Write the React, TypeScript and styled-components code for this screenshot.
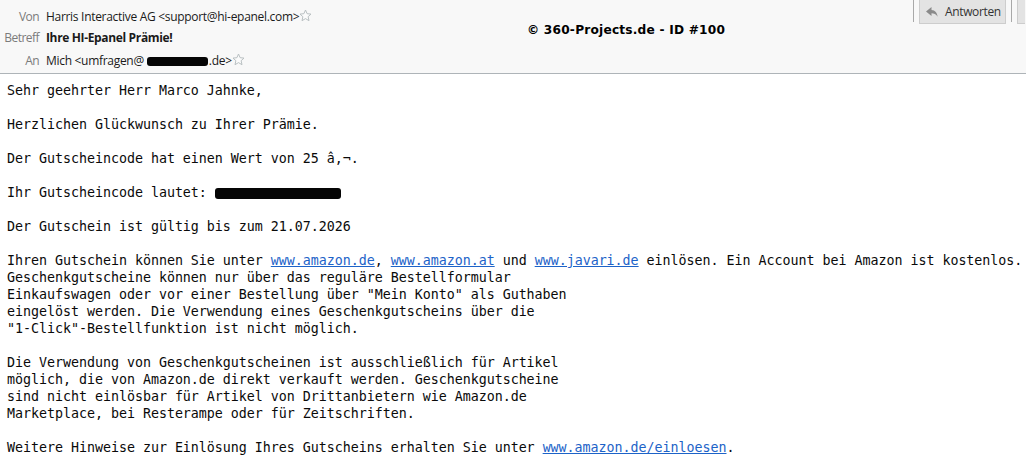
import React from "react";
import styled, { createGlobalStyle } from "styled-components";

const Global = createGlobalStyle`
  html, body { margin: 0; padding: 0; background: #fff; }
  body { width: 1026px; height: 460px; overflow: hidden; }
`;

const Page = styled.div`
  width: 1026px;
  height: 460px;
  overflow: hidden;
  display: flex;
  flex-direction: column;
`;

const Header = styled.header`
  position: relative;
  height: 74px;
  box-sizing: border-box;
  flex: none;
  background: #f8f8f8;
  border-bottom: 1px solid #aeb4b8;
  padding-top: 6px;
  font: 12px/22px "Open Sans", "Noto Sans", sans-serif;
  color: #1a1a1a;
`;

const HeaderRow = styled.div<{ $gap?: number }>`
  display: flex;
  align-items: center;
  height: 21px;
  margin-top: ${(p) => p.$gap ?? 0}px;
`;

const Label = styled.span`
  width: 39px;
  text-align: right;
  color: #7b7b7b;
  margin-right: 7px;
  flex: none;
  letter-spacing: -0.55px;
`;

const Value = styled.span<{ $bold?: boolean }>`
  font-weight: ${(p) => (p.$bold ? 700 : 400)};
  letter-spacing: ${(p) => (p.$bold ? "-0.35px" : "-0.3px")};
  white-space: pre;
  display: inline-flex;
  align-items: center;
`;

const Blackout = styled.span<{ $w: number; $h: number }>`
  display: inline-block;
  width: ${(p) => p.$w}px;
  height: ${(p) => p.$h}px;
  background: #050505;
  border-radius: 3px;
  vertical-align: middle;
`;

const AddressMask = styled(Blackout)`
  margin: 1px 1px 0 3px;
`;

const StarIcon = styled.svg`
  width: 13px;
  height: 13px;
  flex: none;
  margin-top: -3px;
`;

const Star = () => (
  <StarIcon viewBox="0 0 13 13">
    <path
      d="M6.5 1 8.1 4.7 12 5.1 9.1 7.7 10 11.7 6.5 9.6 3 11.7 3.9 7.7 1 5.1 4.9 4.7Z"
      fill="#fbfbfb"
      stroke="#b9c0c2"
      strokeWidth="1"
    />
  </StarIcon>
);

const Watermark = styled.div`
  position: absolute;
  left: 527px;
  top: 21px;
  font: 700 12.2px/18px "DejaVu Sans", sans-serif;
  letter-spacing: 0.2px;
  color: #000;
  white-space: pre;
`;

const Toolbar = styled.div`
  position: absolute;
  top: 0;
  left: 913px;
  display: flex;
  align-items: flex-start;
`;

const Separator = styled.span`
  width: 1px;
  height: 22px;
  background: #a9a9a9;
`;

const ReplyButton = styled.button`
  width: 87px;
  height: 24px;
  box-sizing: border-box;
  margin: 0 5px;
  padding: 0 0 0 5px;
  display: flex;
  align-items: center;
  gap: 6px;
  background: #e3e3e3;
  border: 1px solid #cdcdcd;
  border-top: none;
  font: 12px "Open Sans", "Noto Sans", sans-serif;
  letter-spacing: -0.35px;
  color: #333;
`;

const NextButton = styled.span`
  width: 8px;
  height: 24px;
  box-sizing: border-box;
  margin-left: 5px;
  background: #e3e3e3;
  border: 1px solid #cdcdcd;
  border-top: none;
  border-right: none;
`;

const Body = styled.main`
  padding: 8px 0 0 7px;
  font: 13.33px/17px "DejaVu Sans Mono", "Liberation Mono", monospace;
  letter-spacing: -0.03px;
  color: #0a0a0a;
  white-space: pre;
`;

const Line = styled.div`
  height: 17px;
`;

const Link = styled.a`
  color: #1d63c8;
  text-decoration: underline;
`;

const CodeMask = styled(Blackout)`
  margin-top: 0;
`;

export default function App() {
  return (
    <Page>
      <Global />
      <Header>
        <HeaderRow>
          <Label>Von</Label>
          <Value>Harris Interactive AG &lt;support@hi-epanel.com&gt;</Value>
          <Star />
        </HeaderRow>
        <HeaderRow>
          <Label>Betreff</Label>
          <Value $bold>Ihre HI-Epanel Prämie!</Value>
        </HeaderRow>
        <HeaderRow $gap={2}>
          <Label>An</Label>
          <Value>
            Mich &lt;umfragen@<AddressMask $w={61} $h={9} />.de&gt;
          </Value>
          <Star />
        </HeaderRow>
        <Watermark>© 360-Projects.de - ID #100</Watermark>
        <Toolbar>
          <Separator />
          <ReplyButton>
            <svg width="14" height="12" viewBox="0 0 14 12">
              <path d="M6.5 1 1 5.6 6.5 10V7.2C9 7.2 11 8 12.6 10.8 12.4 7 10 4 6.5 3.9Z" fill="#8a8a8a" />
            </svg>
            Antworten
          </ReplyButton>
          <Separator />
          <NextButton />
        </Toolbar>
      </Header>
      <Body>
        <Line>Sehr geehrter Herr Marco Jahnke,</Line>
        <Line />
        <Line>Herzlichen Glückwunsch zu Ihrer Prämie.</Line>
        <Line />
        <Line>Der Gutscheincode hat einen Wert von 25 â‚¬.</Line>
        <Line />
        <Line>
          Ihr Gutscheincode lautet: <CodeMask $w={126} $h={11} />
        </Line>
        <Line />
        <Line>Der Gutschein ist gültig bis zum 21.07.2026</Line>
        <Line />
        <Line>
          Ihren Gutschein können Sie unter <Link href="#">www.amazon.de</Link>, <Link href="#">www.amazon.at</Link> und{" "}
          <Link href="#">www.javari.de</Link> einlösen. Ein Account bei Amazon ist kostenlos.
        </Line>
        <Line>Geschenkgutscheine können nur über das reguläre Bestellformular</Line>
        <Line>Einkaufswagen oder vor einer Bestellung über "Mein Konto" als Guthaben</Line>
        <Line>eingelöst werden. Die Verwendung eines Geschenkgutscheins über die</Line>
        <Line>"1-Click"-Bestellfunktion ist nicht möglich.</Line>
        <Line />
        <Line>Die Verwendung von Geschenkgutscheinen ist ausschließlich für Artikel</Line>
        <Line>möglich, die von Amazon.de direkt verkauft werden. Geschenkgutscheine</Line>
        <Line>sind nicht einlösbar für Artikel von Drittanbietern wie Amazon.de</Line>
        <Line>Marketplace, bei Resterampe oder für Zeitschriften.</Line>
        <Line />
        <Line>
          Weitere Hinweise zur Einlösung Ihres Gutscheins erhalten Sie unter <Link href="#">www.amazon.de/einloesen</Link>.
        </Line>
      </Body>
    </Page>
  );
}
